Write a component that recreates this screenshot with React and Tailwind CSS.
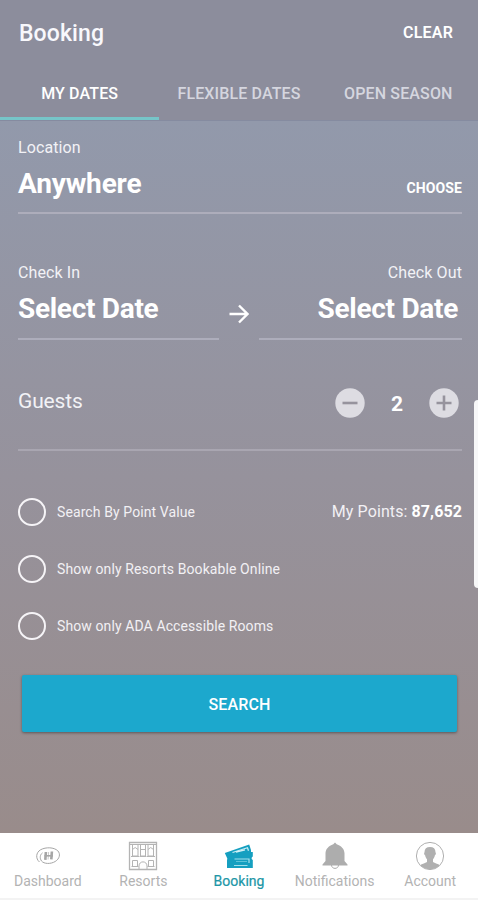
"use client";

import { useState } from "react";

const tabs = ["MY DATES", "FLEXIBLE DATES", "OPEN SEASON"];

const filters = [
  "Search By Point Value",
  "Show only Resorts Bookable Online",
  "Show only ADA Accessible Rooms",
];

function DashboardIcon() {
  return (
    <svg width="26" height="20" viewBox="0 0 26 20" fill="none" stroke="#a6a6a6">
      <path d="M4.500 16C.3 12.500 1 6.500 5.500 3.800C11 .8 19 1.200 22.800 4.800c3 3.200 1.800 8-2.600 10.700C15.500 18.300 9 18 6.500 15C4.500 12 5 8.800 7.500 6.800" strokeWidth="1" />
      <path d="M10.900 6L10.300 13.800M16.900 5.500L16.300 13.300" strokeWidth="2.600" />
      <path d="M9.500 9.800h8.500" strokeWidth="1.600" />
      <path d="M13.600 6l-.5 7.500" strokeWidth="0.600" />
    </svg>
  );
}

function ResortsIcon() {
  return (
    <svg width="30" height="30" viewBox="0 0 30 30" fill="none" stroke="#b4b4b4" strokeWidth="1">
      <path d="M1.500 1.500h27v27h-27z" strokeWidth="1.300" />
      <path d="M2 3.500h26" />
      <path d="M4.500 4v11h5.500V4M12.500 4v11h5V4M20 4v11h5.500V4M4.500 8.500l2.700-2l2.800 2M12.500 8.500h5M20 8.500l2.700-2l2.800 2M3 15.500h8M11.500 15.500h7M19 15.500h8" />
      <path d="M4.500 19.500h5v6h-5zM20.500 19.500h5v6h-5zM11 28.500V25c0-5.500 8-5.500 8 0v3.500M3.500 25.500h7M19.500 25.500h7" />
    </svg>
  );
}

function BookingIcon() {
  return (
    <svg width="30" height="26" viewBox="0 0 30 26">
      <path d="M.8 10L25.200 1.500l1.800 5.500v2h1.800v4.500c-1.600.5-1.600 3 0 3.500V25H3v-7.500l.3-2z" fill="#159fc0" />
      <path d="M8.500 9.500L23.500 4.700l1 3" fill="none" stroke="#c8edf4" strokeWidth="1.300" />
      <path d="M12 9l9-2.200" stroke="#d5f2f7" strokeWidth="1.300" />
      <path d="M10.500 16H25v4M10 22.500h13.500" fill="none" stroke="#a3e0eb" strokeWidth="1.200" />
      <path d="M12 18.500h11" stroke="#5cc3d8" strokeWidth="1" />
    </svg>
  );
}

function BellIcon() {
  return (
    <svg width="26" height="28" viewBox="0 0 26 28">
      <path d="M9.500 23c0 4.500 7 4.500 7 0" fill="#fff" stroke="#aaa" strokeWidth="1" />
      <path d="M13 .5l1.700 1.800C19.500 4 22.500 7.200 22.500 11.500V19l3 3.500V23.500H.5v-1l3-3.500v-7.500C3.500 7.200 6.500 4 11.300 2.300z" fill="#adadad" />
    </svg>
  );
}

function AccountIcon() {
  return (
    <svg width="30" height="30" viewBox="0 0 30 30">
      <circle cx="15" cy="15" r="13.600" fill="#fff" stroke="#b0b0b0" strokeWidth="1" />
      <path d="M15 6c3.700 0 5.600 2 5.500 5.500c.8.500.3 2.300-.6 2.800c-.3 1.900-1 3-1.900 3.900v2.800c3 1.700 5 1.700 6.700 3.300A13.600 13.600 0 0 1 5.300 24.300c1.700-1.600 3.700-1.600 6.700-3.300v-2.800c-.9-.9-1.600-2-1.900-3.900c-.9-.5-1.400-2.300-.6-2.800C9.400 8 11.300 6 15 6z" fill="#b0b0b0" />
    </svg>
  );
}

const navItems = [
  { label: "Dashboard", icon: DashboardIcon },
  { label: "Resorts", icon: ResortsIcon },
  { label: "Booking", icon: BookingIcon },
  { label: "Notifications", icon: BellIcon },
  { label: "Account", icon: AccountIcon },
];

export default function App() {
  const [activeTab, setActiveTab] = useState(0);
  const [guests, setGuests] = useState(2);
  const [checked, setChecked] = useState([]);

  const toggle = (i) =>
    setChecked(checked.includes(i) ? checked.filter((c) => c !== i) : [...checked, i]);

  return (
    <div className="relative flex h-[900px] w-full max-w-[478px] flex-col overflow-hidden bg-white font-['Roboto',sans-serif] leading-none text-white">
      <header className="h-[121px] shrink-0 border-b border-[#858ba0] bg-[#8c8d9c]">
        <div className="flex h-[65px] items-center justify-between pr-[25px] pl-[19px]">
          <h1 className="pt-[2px] text-[23px] font-medium tracking-[0.1px] text-[#f8f8fc]">Booking</h1>
          <button className="text-base font-semibold tracking-[0.2px]">CLEAR</button>
        </div>
        <nav className="grid h-[55px] grid-cols-3">
          {tabs.map((tab, i) => (
            <button
              key={tab}
              onClick={() => setActiveTab(i)}
              className={`border-b-[3px] pt-[5px] text-base font-medium tracking-[0.13px] whitespace-nowrap ${
                activeTab === i ? "border-[#76c5c8] text-white" : "border-transparent text-[#d5d6df]"
              }`}
            >
              {tab}
            </button>
          ))}
        </nav>
      </header>

      <main className="h-[712px] shrink-0 bg-linear-to-b from-[#9299ab] via-[#96929c] via-50% to-[#998c8b] pr-4 pl-[18px]">
        <section className="h-[93px] border-b-2 border-[#adadbb] pt-[18px]">
          <p className="h-[18px] text-base leading-[18px] tracking-[0.1px] text-[#f2f2f6]">Location</p>
          <div className="mt-[11px] flex h-8 items-center justify-between">
            <span className="text-[28px] font-bold tracking-[-0.15px]">Anywhere</span>
            <button className="pt-2 text-sm font-bold tracking-[0.1px]">CHOOSE</button>
          </div>
        </section>

        <section className="mt-12 flex h-[78px]">
          <div className="w-[201px] border-b-2 border-[#adadbb]">
            <p className="pt-[2px] text-base leading-[18px] tracking-[0.1px] text-[#f2f2f6]">Check In</p>
            <p className="mt-[11px] text-[28px] leading-8 font-bold tracking-[-0.3px]">Select Date</p>
          </div>
          <svg className="mx-[10px] mt-[42px]" width="20" height="20" viewBox="0 0 20 20" fill="none" stroke="white" strokeWidth="2.400">
            <path d="M.5 10h18M10 1.500l8.500 8.500-8.500 8.500" />
          </svg>
          <div className="grow border-b-2 border-[#adadbb] text-right">
            <p className="pt-[2px] text-base leading-[18px] tracking-[0.1px] text-[#f2f2f6]">Check Out</p>
            <p className="mt-[11px] pr-1 text-[28px] leading-8 font-bold tracking-[-0.3px]">Select Date</p>
          </div>
        </section>

        <section className="flex h-[111px] justify-between border-b-2 border-[#a9a6b1] pt-12">
          <span className="mt-px text-[21px] leading-6 tracking-[-0.15px] text-[#f2f2f6]">Guests</span>
          <div className="flex h-[30px] items-center pr-[3px]">
            <button aria-label="Remove guest" onClick={() => setGuests(Math.max(1, guests - 1))}>
              <svg width="30" height="30" viewBox="0 0 30 30">
                <circle cx="15" cy="15" r="14.700" fill="#dddce2" />
                <path d="M7.500 15h15" stroke="#96939d" strokeWidth="2.600" />
              </svg>
            </button>
            <span className="w-16 pt-[2px] text-center text-[21px] font-bold">{guests}</span>
            <button aria-label="Add guest" onClick={() => setGuests(guests + 1)}>
              <svg width="30" height="30" viewBox="0 0 30 30">
                <circle cx="15" cy="15" r="14.700" fill="#dddce2" />
                <path d="M7.500 15h15M15 7.500v15" stroke="#96939d" strokeWidth="2.600" />
              </svg>
            </button>
          </div>
        </section>

        <section className="mt-8">
          {filters.map((label, i) => (
            <div key={label} className="flex h-[57px] items-center justify-between">
              <button onClick={() => toggle(i)} className="flex items-center">
                <span
                  className={`size-7 rounded-full border-2 border-[#f6f4f7] ${
                    checked.includes(i) ? "bg-white/60" : ""
                  }`}
                />
                <span className="ml-[11px] pt-px text-sm tracking-[0.1px] text-[#f2f0f4]">{label}</span>
              </button>
              {i === 0 && (
                <p className="text-base tracking-[0.1px] text-[#f2f0f4]">
                  My Points: <b className="font-bold text-white">87,652</b>
                </p>
              )}
            </div>
          ))}
        </section>

        <button className="mx-1 mt-[21px] h-[57px] w-[435px] rounded-[2px] bg-[#1ca8cd] pt-[2px] text-base font-medium tracking-[0.15px] shadow-[0_1px_3px_rgba(0,0,0,0.4)]">
          SEARCH
        </button>
      </main>

      <footer className="grid h-[65px] shrink-0 grid-cols-5 bg-white">
        {navItems.map(({ label, icon: Icon }) => (
          <button
            key={label}
            className={`flex flex-col items-center text-sm leading-4 ${
              label === "Booking" ? "text-[#2196a6] [-webkit-text-stroke:0.2px]" : "text-[#b3b3b3]"
            }`}
          >
            <span className="mt-2 flex h-[30px] items-center">
              <Icon />
            </span>
            <span className="mt-[2px]">{label}</span>
          </button>
        ))}
      </footer>
      <div className="h-[2px] bg-[#f3f3f3]" />

      {/* edge panel handle */}
      <div className="absolute top-[400px] right-0 h-[188px] w-1 rounded-l-[4px] bg-[#f7f7f8]" />
    </div>
  );
}
